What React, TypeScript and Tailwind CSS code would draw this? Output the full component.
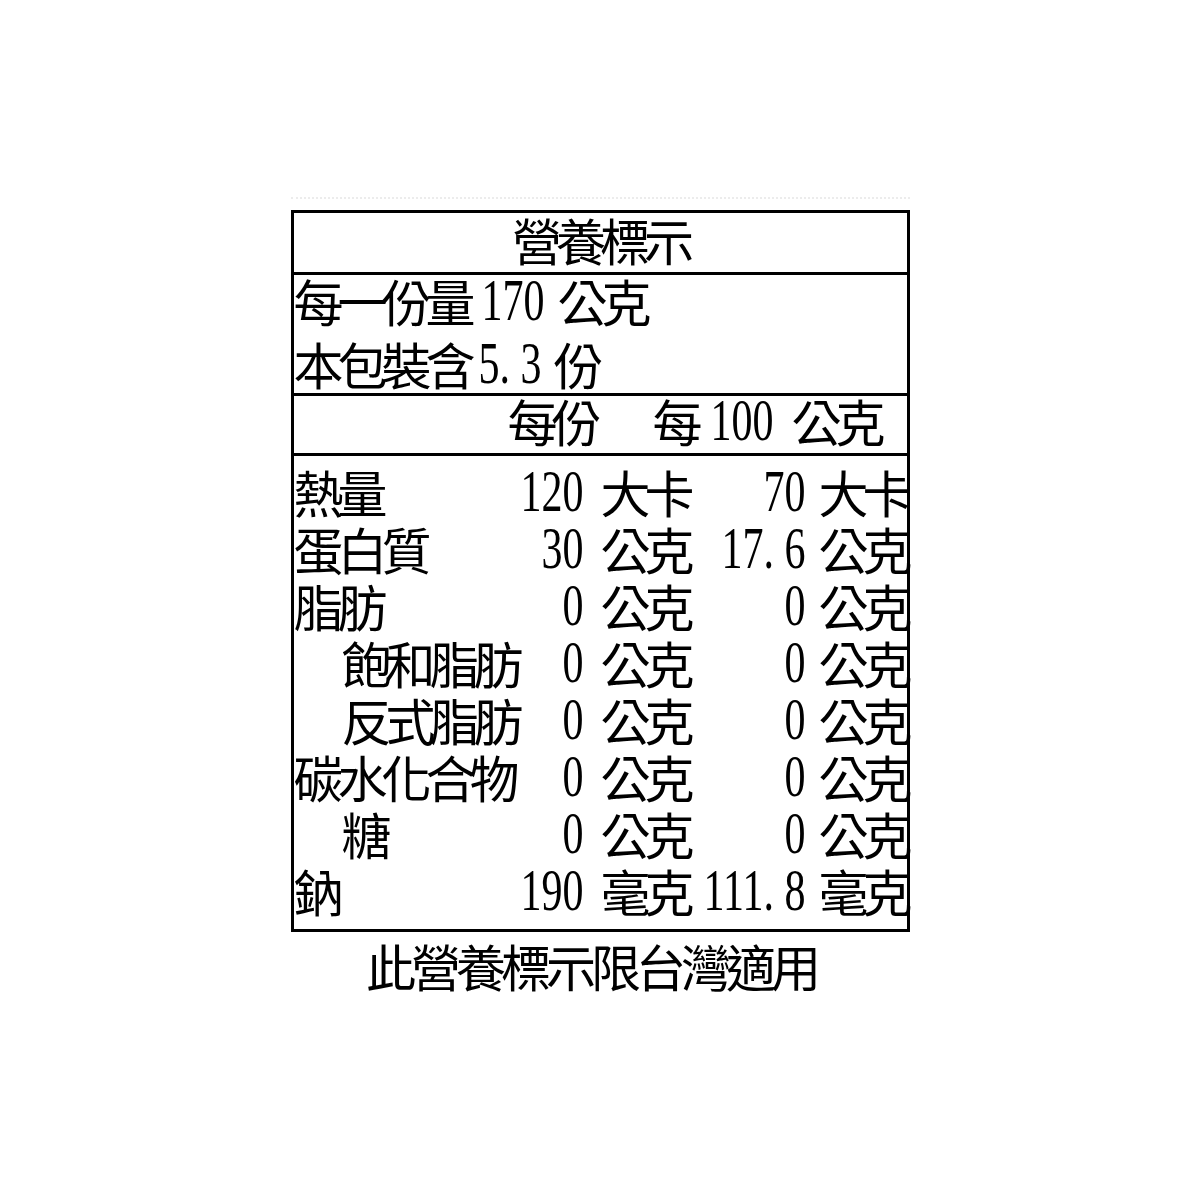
import { type FC } from 'react';

type Row = {
  label: string;
  indent?: boolean;
  perServing: string;
  perServingUnit: string;
  per100: string;
  per100Unit: string;
};

const ROWS: Row[] = [
  { label: '熱量', perServing: '120', perServingUnit: '大卡', per100: '70', per100Unit: '大卡' },
  { label: '蛋白質', perServing: '30', perServingUnit: '公克', per100: '17.6', per100Unit: '公克' },
  { label: '脂肪', perServing: '0', perServingUnit: '公克', per100: '0', per100Unit: '公克' },
  { label: '飽和脂肪', indent: true, perServing: '0', perServingUnit: '公克', per100: '0', per100Unit: '公克' },
  { label: '反式脂肪', indent: true, perServing: '0', perServingUnit: '公克', per100: '0', per100Unit: '公克' },
  { label: '碳水化合物', perServing: '0', perServingUnit: '公克', per100: '0', per100Unit: '公克' },
  { label: '糖', indent: true, perServing: '0', perServingUnit: '公克', per100: '0', per100Unit: '公克' },
  { label: '鈉', perServing: '190', perServingUnit: '毫克', per100: '111.8', per100Unit: '毫克' },
];

// Tall, narrow serif digits like the printed label; the period gets a full digit cell
const Num: FC<{ value: string; className?: string }> = ({ value, className = '' }) => (
  <span
    className={`inline-block scale-y-[1.4] -translate-y-[8px] text-[42px] leading-none tracking-normal ${className}`}
  >
    {value.split('').map((c, i) =>
      c === '.' ? (
        <span key={i} className="inline-block w-[21px] text-left">
          .
        </span>
      ) : (
        <span key={i}>{c}</span>
      ),
    )}
  </span>
);

const NutritionRow: FC<{ row: Row }> = ({ row }) => (
  <div className="flex h-[57px] items-center leading-[57px] whitespace-nowrap">
    <span className={`min-w-0 flex-1 ${row.indent ? 'pl-[48px]' : ''}`}>{row.label}</span>
    <span className="w-[90px] text-right">
      <Num value={row.perServing} />
    </span>
    <span className="ml-[17px] w-[88px]">{row.perServingUnit}</span>
    <span className="w-[117px] text-right">
      <Num value={row.per100} />
    </span>
    <span className="ml-[13px] w-[88px]">{row.per100Unit}</span>
  </div>
);

export default function App() {
  return (
    <div className="min-h-[1200px] bg-white pt-[197px] font-['Liberation_Serif','Noto_Sans_CJK_TC',serif] text-[50px] tracking-[-6px] text-black">
      <div className="mx-auto w-[619px] border-t-2 border-dotted border-[#ececec]" />
      <div className="mx-auto mt-[11px] flex w-[619px] flex-col border-[3px] border-black">
        <div className="flex h-[62px] items-center justify-center border-b-[3px] border-black pt-[4px] leading-[55px]">
          營養標示
        </div>

        <div className="flex h-[121px] flex-col gap-[9px] border-b-[3px] border-black pt-[3px] whitespace-nowrap">
          <div className="flex items-baseline leading-[54px]">
            <span>每一份量</span>
            <Num value="170" className="ml-[12px]" />
            <span className="ml-[13px]">公克</span>
          </div>
          <div className="flex items-baseline leading-[54px]">
            <span>本包裝含</span>
            <Num value="5.3" className="ml-[9px]" />
            <span className="ml-[12px]">份</span>
          </div>
        </div>

        <div className="flex h-[60px] items-baseline border-b-[3px] border-black pt-[3px] pl-[214px] leading-[53px] whitespace-nowrap">
          <span>每份</span>
          <span className="ml-[57px]">每</span>
          <Num value="100" className="ml-[14px]" />
          <span className="ml-[18px]">公克</span>
        </div>

        <div className="flex h-[473px] flex-col pt-[12px]">
          {ROWS.map((row) => (
            <NutritionRow key={row.label} row={row} />
          ))}
        </div>
      </div>

      <div className="mx-auto mt-[8px] flex w-[619px] justify-center pr-[18px] leading-[60px] tracking-[-5px]">
        此營養標示限台灣適用
      </div>
    </div>
  );
}
